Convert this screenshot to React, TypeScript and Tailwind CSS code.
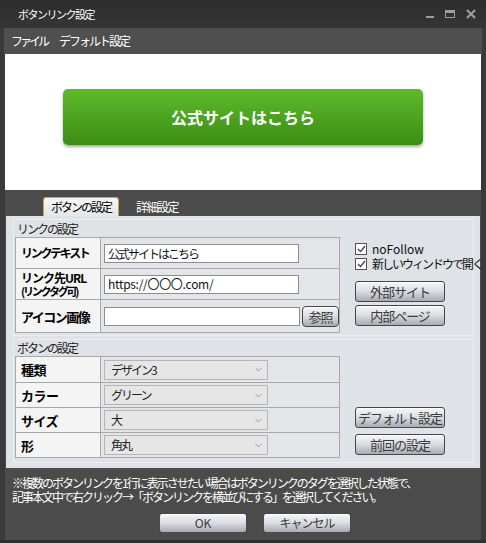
import { ChevronDown } from 'lucide-react'

const font = { fontFamily: '"Noto Sans CJK JP", "Noto Sans", sans-serif' }

function SilverButton({ label, className = '' }: { label: string; className?: string }) {
  return (
    <div
      className={`flex items-center justify-center rounded-[3px] border border-[#474747] bg-linear-to-b from-[#f6f7f9] via-[#d9dce1] to-[#a7abb3] text-[12px] leading-none tracking-[-1px] text-[#3a3a3a] shadow-[inset_0_1px_0_#ffffff] ${className}`}
    >
      {label}
    </div>
  )
}

function Check({ label, latin = false }: { label: string; latin?: boolean }) {
  return (
    <div className="flex h-[13px] items-center gap-[5px] text-[12px] leading-none text-[#111]">
      <div className="flex h-[12px] w-[12px] shrink-0 items-center justify-center border border-[#555] bg-white">
        <svg width="9" height="8" viewBox="0 0 9 8">
          <path d="M1 4 L3.5 6.5 L8 1" fill="none" stroke="#444" strokeWidth="1.3" />
        </svg>
      </div>
      <span className={latin ? 'tracking-[0px]' : 'whitespace-nowrap'}>{label}</span>
    </div>
  )
}

function LabelCell({ children, className = '' }: { children: React.ReactNode; className?: string }) {
  return (
    <div
      className={`flex w-[85px] shrink-0 items-center border-r border-[#a8a8a8] bg-[#f4f4f4] pl-[5px] font-bold leading-none text-black ${className}`}
    >
      {children}
    </div>
  )
}

function TextInput({ value, w = 'w-[195px]', latin = false }: { value: string; w?: string; latin?: boolean }) {
  return (
    <div
      className={`flex h-[19px] ${w} items-center border border-[#8d8d8d] bg-white px-[3px] text-[12px] leading-none text-[#111] ${latin ? 'tracking-[-0.3px]' : ''}`}
    >
      {value}
    </div>
  )
}

function Select({ value }: { value: string }) {
  return (
    <div className="ml-[3px] flex h-[20px] w-[164px] items-center justify-between border border-[#b5b5b5] bg-[#e6e6e6] pl-[6px] pr-[3px] text-[12px] leading-none text-[#222]">
      <span>{value}</span>
      <ChevronDown size={11} strokeWidth={1.5} className="text-[#777]" />
    </div>
  )
}

const selects = [
  ['種類', 'デザイン3'],
  ['カラー', 'グリーン'],
  ['サイズ', '大'],
  ['形', '角丸'],
]

export default function App() {
  return (
    <div className="flex h-[543px] w-[486px] flex-col overflow-hidden bg-[#3a3a3a] tracking-[-2px]" style={font}>
      {/* title bar */}
      <div className="flex h-[28px] shrink-0 items-center bg-linear-to-b from-[#2c2c2c] to-[#363636] pr-[10px]">
        <span className="ml-[18px] text-[11px] leading-none tracking-[-1.5px] text-white">ボタンリンク設定</span>
        <div className="ml-auto flex items-center gap-[11px] text-[#9d9d9d]">
          <div className="mt-[6px] h-[2px] w-[8px] bg-[#9d9d9d]" />
          <div className="h-[8px] w-[10px] border border-t-[3px] border-[#9d9d9d]" />
          <svg width="10" height="10" viewBox="0 0 10 10">
            <path d="M1 1 L9 9 M9 1 L1 9" stroke="#9d9d9d" strokeWidth="2.2" />
          </svg>
        </div>
      </div>

      {/* menu bar */}
      <div className="mx-[4px] flex h-[26px] shrink-0 items-center gap-[12px] bg-[#4f4f4f] pl-[7px] text-[12px] leading-none text-white">
        <span className="tracking-[-3px]">ファイル</span>
        <span>デフォルト設定</span>
      </div>

      <div className="mx-[5px] flex flex-1 flex-col bg-[#4b4b4b]">
        {/* preview */}
        <div className="flex h-[136px] shrink-0 justify-center bg-white pt-[35px]">
          <div className="flex h-[56px] w-[360px] items-center justify-center rounded-[5px] bg-linear-to-b from-[#5fbb2c] to-[#3b8d13] text-[16px] font-bold tracking-normal text-white shadow-[0_2px_3px_rgba(0,0,0,0.35)]">
            公式サイトはこちら
          </div>
        </div>

        {/* tabs */}
        <div className="flex h-[26px] shrink-0 items-end pl-[38px] text-[12px] leading-none">
          <div className="flex h-[19px] w-[76px] items-center justify-center rounded-t-[3px] border border-b-0 border-[#c9a640] bg-linear-to-b from-[#f7f7f7] to-[#e4e6e9] text-black">
            ボタンの設定
          </div>
          <div className="flex h-[19px] items-center pl-[17px] tracking-[-1.5px] text-white">詳細設定</div>
        </div>

        {/* panel */}
        <div className="mx-[1px] flex h-[252px] shrink-0 flex-col gap-[3px] bg-[#dfe2e6] pl-[7px] pt-[3px]">
          {/* link group */}
          <div className="flex w-[461px] border border-[#eceef1] pb-[2px]">
            <div className="flex flex-col">
              <div className="h-[17px] pl-[3px] text-[12px] leading-[17px] text-[#222]">リンクの設定</div>
              <div className="ml-[1px] flex w-[325px] flex-col border border-[#a8a8a8] bg-[#e3e5e8]">
                <div className="flex h-[30px]">
                  <LabelCell className="text-[12px] tracking-[-2.3px]">リンクテキスト</LabelCell>
                  <div className="flex items-center pl-[3px] pt-[1px]">
                    <TextInput value="公式サイトはこちら" />
                  </div>
                </div>
                <div className="flex h-[31px] border-t border-[#a8a8a8]">
                  <LabelCell>
                    <span className="flex flex-col gap-[2px]">
                      <span className="text-[12px] leading-[12px] tracking-[-1px]">リンク先URL</span>
                      <span className="text-[11px] leading-[11px] tracking-[-2.2px]">(リンクタグ可)</span>
                    </span>
                  </LabelCell>
                  <div className="flex items-center pl-[3px]">
                    <TextInput value="https://〇〇〇.com/" latin />
                  </div>
                </div>
                <div className="flex h-[33px] border-t border-[#a8a8a8]">
                  <LabelCell className="text-[13px] tracking-[-1.5px]">アイコン画像</LabelCell>
                  <div className="flex items-center gap-[2px] pl-[3px]">
                    <TextInput value="" w="w-[196px]" />
                    <SilverButton label="参照" className="h-[21px] w-[37px] rounded-[4px] text-[13px]" />
                  </div>
                </div>
              </div>
            </div>
            <div className="ml-[15px] flex flex-col pt-[22px]">
              <Check label="noFollow" latin />
              <div className="mt-[2px]">
                <Check label="新しいウィンドウで開く" />
              </div>
              <SilverButton label="外部サイト" className="mt-[11px] h-[21px] w-[90px] text-[13px]" />
              <SilverButton label="内部ページ" className="mt-[3px] h-[21px] w-[90px] text-[13px]" />
            </div>
          </div>

          {/* button group */}
          <div className="flex w-[461px] border border-[#eceef1] pb-[4px]">
            <div className="flex flex-col">
              <div className="h-[16px] pl-[3px] text-[12px] leading-[16px] text-[#222]">ボタンの設定</div>
              <div className="ml-[1px] flex w-[325px] flex-col border border-[#a8a8a8] bg-[#e3e5e8]">
                {selects.map(([k, v], i) => (
                  <div key={k} className={`flex h-[25px] ${i > 0 ? 'border-t border-[#a8a8a8]' : ''}`}>
                    <LabelCell className="text-[13px] tracking-[-0.5px]">{k}</LabelCell>
                    <div className="flex items-center">
                      <Select value={v} />
                    </div>
                  </div>
                ))}
              </div>
            </div>
            <div className="ml-[15px] flex flex-col justify-end pb-[3px]">
              <SilverButton label="デフォルト設定" className="h-[21px] w-[90px] text-[13px]" />
              <SilverButton label="前回の設定" className="mt-[6px] h-[21px] w-[90px] text-[13px]" />
            </div>
          </div>
        </div>

        {/* note */}
        <div className="whitespace-nowrap pl-[7px] pt-[8px] text-[12px] leading-[14px] text-white">
          <div>※複数のボタンリンクを1行に表示させたい場合はボタンリンクのタグを選択した状態で、</div>
          <div>記事本文中で右クリック→「ボタンリンクを横並びにする」を選択してください。</div>
        </div>

        {/* footer buttons */}
        <div className="flex justify-center gap-[16px] pl-[24px] pt-[9px]">
          <SilverButton label="OK" className="h-[20px] w-[88px] border-[#333] tracking-[0px]" />
          <SilverButton label="キャンセル" className="h-[20px] w-[88px] border-[#333]" />
        </div>
      </div>
      <div className="h-[3px] shrink-0 bg-[#2f2f2f]" />
    </div>
  )
}
